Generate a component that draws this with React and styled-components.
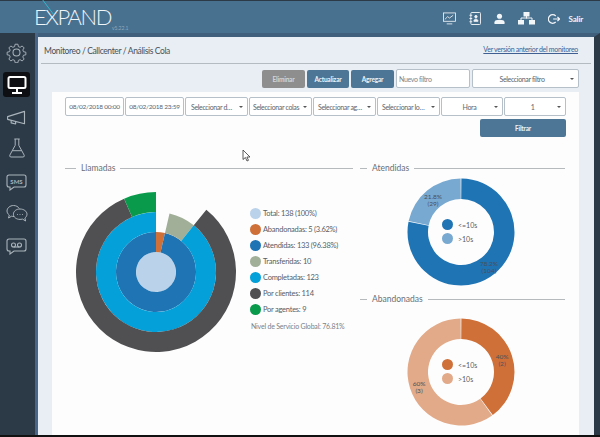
import React from 'react';
import styled, { createGlobalStyle } from 'styled-components';

const Global = createGlobalStyle`
  html, body { margin: 0; padding: 0; background: #000; }
  * { box-sizing: border-box; }
`;

const Page = styled.div`
  position: relative;
  width: 600px;
  height: 437px;
  overflow: hidden;
  display: flex;
  flex-direction: column;
  font-family: Lato, "Open Sans", sans-serif;
  color: #4a5560;
  background: #2c3a47;
  border-bottom: 2px solid #111;
`;

const Header = styled.header`
  height: 33px;
  flex: none;
  display: flex;
  align-items: center;
  justify-content: space-between;
  padding: 0 17px 0 34px;
  background: #48708f;
  border-top: 1px solid #2c3a47;
`;

const Logo = styled.div`
  position: relative;
  color: #f0f5f8;
  font-size: 22px;
  font-weight: 300;
  letter-spacing: -1.5px;
  line-height: 1;
`;

const LogoMark = styled.svg`
  position: absolute;
  left: 7px;
  top: -8px;
`;

const Version = styled.span`
  position: absolute;
  left: 78px;
  top: 20px;
  font-size: 5px;
  line-height: 1;
  letter-spacing: 0;
  color: #c5d3de;
  white-space: nowrap;
`;

const TopIcons = styled.nav`
  display: flex;
  align-items: center;
  gap: 13px;
  padding-top: 3px;
  color: #f3f6f9;
`;

const Exit = styled.span`
  font-size: 8px;
  font-weight: 700;
  letter-spacing: -0.2px;
  margin-left: -4px;
`;

const Body = styled.div`
  flex: 1;
  display: flex;
  min-height: 0;
`;

const Sidebar = styled.aside`
  width: 38px;
  flex: none;
  padding: 7px 2px 0 0;
  background: #2c3a47;
  border-right: 3px solid #48668a;
  display: flex;
  flex-direction: column;
  align-items: center;
`;

const SideItem = styled.div`
  width: 27px;
  height: 25px;
  flex: none;
  margin-bottom: ${p => p.$gap}px;
  display: flex;
  align-items: center;
  justify-content: center;
  border-radius: 3px;
  background: ${p => (p.$active ? '#0d0f12' : 'transparent')};
  color: ${p => (p.$active ? '#fff' : '#aab4bb')};
`;

const Main = styled.main`
  flex: 1;
  display: flex;
  flex-direction: column;
  background: #e8eef4;
  padding: 0 1px 0 3px;
  border-top: 4px solid #3f5f7c;
  border-right: 6px solid #2c3a47;
  min-width: 0;
  min-height: 0;
`;

const TitleRow = styled.div`
  height: 27px;
  flex: none;
  display: flex;
  align-items: center;
  justify-content: space-between;
  padding: 2px 13px 0 3px;
  border-bottom: 1px solid #b4bcc2;
  margin-right: 2px;
`;

const Crumb = styled.h1`
  margin: 0;
  font-size: 8.5px;
  font-weight: 400;
  letter-spacing: -0.37px;
  color: #465159;
`;

const OldLink = styled.a`
  font-size: 7px;
  letter-spacing: -0.3px;
  color: #3f5f92;
  text-decoration: underline;
  margin-top: -4px;
`;

const ActionRow = styled.div`
  height: 28px;
  flex: none;
  display: flex;
  align-items: flex-end;
  justify-content: flex-end;
  gap: 2px;
  padding: 0 14px 4px 0;
`;

const Button = styled.button`
  width: ${p => p.$w}px;
  height: 18px;
  padding: 0;
  border: none;
  border-radius: 2px;
  background: ${p => p.$bg || '#4d7696'};
  color: ${p => p.$fg || '#eef3f6'};
  font: 700 6.5px Lato, sans-serif;
  letter-spacing: -0.2px;
`;

const Field = styled.div`
  width: ${p => p.$w}px;
  height: 19px;
  flex: none;
  padding: 0 ${p => p.$right ?? 4}px 0 ${p => p.$pad ?? 4}px;
  display: flex;
  align-items: center;
  justify-content: ${p => (p.$center ? 'center' : 'flex-start')};
  background: #fff;
  border: 1px solid #b6c0c8;
  border-radius: 2px;
  font-size: ${p => (p.$small ? 6.5 : 7)}px;
  letter-spacing: ${p => (p.$small ? -0.25 : -0.35)}px;
  color: ${p => p.$fg || '#5b646c'};
  white-space: nowrap;
  position: relative;
`;

const Caret = styled.i`
  position: absolute;
  right: 4px;
  top: 8px;
  border: 2px solid transparent;
  border-top: 2.5px solid #555;
  border-bottom: none;
`;

const Card = styled.section`
  flex: 1;
  margin: 0 14px 0 11px;
  background: #fdfdfe;
  padding: 5px 13px 0 13px;
  min-height: 0;
  overflow: hidden;
`;

const FilterRow = styled.div`
  display: flex;
  gap: 1px;
`;

const FilterAction = styled.div`
  display: flex;
  justify-content: flex-end;
  margin-top: 3px;
`;

const Charts = styled.div`
  display: grid;
  grid-template-columns: 288px 205px;
  column-gap: 7px;
  margin-top: 25px;
`;

const Legend = styled.div`
  display: flex;
  align-items: center;
  gap: 5px;
  font-size: 8.5px;
  line-height: 12px;
  color: #6a6f74;
  &::before {
    content: '';
    flex: none;
    width: ${p => p.$lead}px;
    height: 1px;
    background: #b7babc;
  }
  &::after {
    content: '';
    flex: 1;
    height: 1px;
    background: #b7babc;
  }
`;

const Left = styled.div``;

const Right = styled.div`
  display: flex;
  flex-direction: column;
`;

const SunRow = styled.div`
  display: flex;
  align-items: flex-start;
  margin-top: 17px;
  margin-left: 10px;
`;

const KeyList = styled.ul`
  list-style: none;
  margin: 14px 0 0 13px;
  padding: 0;
  font-size: 7.5px;
  letter-spacing: -0.25px;
  color: #555e66;
`;

const KeyItem = styled.li`
  height: 16px;
  display: flex;
  align-items: center;
  gap: 2px;
  white-space: nowrap;
`;

const Dot = styled.span`
  width: 11px;
  height: 11px;
  border-radius: 50%;
  background: ${p => p.$c};
  flex: none;
`;

const Service = styled.p`
  margin: 5px 0 0 14px;
  font-size: 7px;
  letter-spacing: -0.2px;
  color: #7a8288;
  white-space: nowrap;
`;

const NextTitle = styled.div`
  margin: 80px 0 0 18px;
  font-size: 9px;
  letter-spacing: -0.1px;
  color: #3c444b;
`;

const DonutWrap = styled.div`
  position: relative;
  width: 110px;
  height: 110px;
  flex: none;
  margin: ${p => p.$top}px 0 ${p => p.$bottom}px 46px;
`;

const DonutKeys = styled.div`
  position: absolute;
  left: 36px;
  top: 42px;
  font-size: 7px;
  color: #555e66;
  display: flex;
  flex-direction: column;
  gap: 3px;
`;

const DonutKey = styled.div`
  display: flex;
  align-items: center;
  gap: 5px;
  height: 11px;
`;

const Pct = styled.span`
  position: absolute;
  left: ${p => p.$x}px;
  top: ${p => p.$y}px;
  width: 24px;
  text-align: center;
  font-size: 6.5px;
  line-height: 7px;
  color: #4a5058;
`;

const Cursor = styled.svg`
  position: absolute;
  left: 242px;
  top: 149px;
`;

const pol = (cx, cy, r, a) => {
  const t = ((a - 90) * Math.PI) / 180;
  return [cx + r * Math.cos(t), cy + r * Math.sin(t)];
};

const arc = (cx, cy, r0, r1, a0, a1) => {
  const large = a1 - a0 > 180 ? 1 : 0;
  const [x0, y0] = pol(cx, cy, r1, a0);
  const [x1, y1] = pol(cx, cy, r1, a1);
  const [x2, y2] = pol(cx, cy, r0, a1);
  const [x3, y3] = pol(cx, cy, r0, a0);
  return `M${x0} ${y0}A${r1} ${r1} 0 ${large} 1 ${x1} ${y1}L${x2} ${y2}A${r0} ${r0} 0 ${large} 0 ${x3} ${y3}Z`;
};

const Sunburst = () => (
  <svg width="162" height="162" viewBox="0 0 162 162">
    <circle cx="81" cy="81" r="20" fill="#bad3ea" />
    <path d={arc(81, 81, 20, 40, 0, 13)} fill="#cf7038" />
    <path d={arc(81, 81, 20, 40, 13, 359.99)} fill="#1f74b4" />
    <path d={arc(81, 81, 40, 60, 13, 39)} fill="#a1af98" />
    <path d={arc(81, 81, 40, 60, 39, 359.99)} fill="#04a0d9" />
    <path d={arc(81, 81, 60, 80, 39, 336.5)} fill="#505052" />
    <path d={arc(81, 81, 60, 80, 336.5, 359.99)} fill="#0a9a4c" />
  </svg>
);

const Donut = ({ dark, light, split }) => (
  <svg width="110" height="110" viewBox="0 0 110 110">
    <path d={arc(55, 55, 33, 53.5, split[0] + 0.4, split[1] - 0.4)} fill={dark} />
    <path d={arc(55, 55, 33, 53.5, split[1] + 0.4, split[0] + 359.6)} fill={light} />
  </svg>
);

const Gear = () => (
  <svg width="21" height="21" viewBox="0 0 24 24" fill="none" stroke="currentColor" strokeWidth="1.2" strokeLinejoin="round">
    <circle cx="12" cy="12" r="4" />
    <path d="M10.2 1.5h3.6l.6 3 2.2.9 2.6-1.700 2.500 2.500-1.700 2.600.9 2.200 3 .6v3.300l-3 .6-.9 2.200 1.700 2.600-2.500 2.500-2.600-1.700-2.200.9-.6 3h-3.600l-.6-3-2.200-.9-2.600 1.700-2.500-2.500 1.700-2.600-.9-2.200-3-.6v-3.300l3-.6.9-2.200-1.700-2.600 2.500-2.500 2.600 1.700 2.200-.9z" transform="translate(1.200 1.200) scale(.9)" />
  </svg>
);

const Screen = () => (
  <svg width="20" height="20" viewBox="0 0 20 20" fill="none" stroke="currentColor" strokeWidth="2">
    <rect x="1.500" y="2" width="17" height="11" rx="1.500" />
    <path d="M10 13v4M5 18h10" />
  </svg>
);

const Horn = () => (
  <svg width="21" height="16" viewBox="0 0 22 18" fill="none" stroke="currentColor" strokeWidth="1.300" strokeLinejoin="round">
    <path d="M1 7.500 20 1.500v14L1 10.500z" />
    <path d="M5 11.500v3l5 1.200v-3" />
  </svg>
);

const Flask = () => (
  <svg width="18" height="22" viewBox="0 0 20 22" fill="none" stroke="currentColor" strokeWidth="1.100" strokeLinejoin="round">
    <path d="M7 1h6M8 1v7L2 19a1.500 1.500 0 0 0 1.300 2h13.400A1.500 1.500 0 0 0 18 19L12 8V1" />
    <path d="M5 14h10" />
  </svg>
);

const Sms = () => (
  <svg width="21" height="17" viewBox="0 0 21 17" fill="none">
    <path d="M3 1h15a2 2 0 0 1 2 2v8a2 2 0 0 1-2 2H8l-4 3v-3H3a2 2 0 0 1-2-2V3a2 2 0 0 1 2-2z" stroke="currentColor" strokeWidth="1.100" />
    <text x="10.500" y="9.500" textAnchor="middle" fontSize="6" fontWeight="700" fontFamily="Lato, sans-serif" fill="currentColor">SMS</text>
  </svg>
);

const Chat = () => (
  <svg width="22" height="19" viewBox="0 0 22 19" fill="none" stroke="currentColor" strokeWidth="1">
    <path d="M8 12.500c-1 0-1.700-.1-2.400-.3L2.500 14l.8-3C1.800 10 1 8.500 1 7c0-3 3-5.500 6.500-5.500 2.500 0 4.700 1.200 5.800 3" />
    <path d="M14 5c3.800 0 7 2.300 7 5.200 0 1.500-.8 2.800-2.100 3.800l.7 3-3-1.900c-.8.200-1.700.3-2.600.3-3.800 0-6.600-2.300-6.600-5.200S10.200 5 14 5z" />
    <path d="M11 10.500h.8M13.600 10.500h.8M16.200 10.500h.8" />
  </svg>
);

const Voicemail = () => (
  <svg width="21" height="17" viewBox="0 0 21 17" fill="none" stroke="currentColor" strokeWidth="1.100">
    <path d="M3 1h15a2 2 0 0 1 2 2v8a2 2 0 0 1-2 2H8l-4 3v-3H3a2 2 0 0 1-2-2V3a2 2 0 0 1 2-2z" />
    <circle cx="7.500" cy="7" r="2" />
    <circle cx="13.500" cy="7" r="2" />
    <path d="M7.500 9h6" />
  </svg>
);

const Monitor = () => (
  <svg width="13" height="13" viewBox="0 0 14 14" fill="none" stroke="currentColor" strokeWidth="0.900">
    <rect x="0.500" y="1" width="13" height="9" />
    <path d="M2 8l3-3 2 1.500L11 3.500M4 12.800h6" />
  </svg>
);

const Contacts = () => (
  <svg width="12" height="13" viewBox="0 0 13 14" fill="none" stroke="currentColor" strokeWidth="1">
    <rect x="2" y="0.500" width="10.500" height="13" rx="1" />
    <path d="M0.500 3.500H3.500M0.500 7H3.500M0.500 10.500H3.500" />
    <circle cx="7.500" cy="5" r="1.300" fill="currentColor" />
    <path d="M5.300 10c0-3 4.400-3 4.400 0z" fill="currentColor" />
  </svg>
);

const User = () => (
  <svg width="11" height="12" viewBox="0 0 12 12" fill="currentColor">
    <circle cx="6" cy="3" r="2.800" />
    <path d="M0.500 11.500V9.500C0.500 7.500 3 6.800 6 6.800s5.500.7 5.500 2.700v2z" />
  </svg>
);

const Network = () => (
  <svg width="17" height="13" viewBox="0 0 17 13" fill="currentColor">
    <rect x="5.500" y="0" width="6" height="4.500" />
    <rect x="0" y="8" width="6" height="4.500" />
    <rect x="11" y="8" width="6" height="4.500" />
    <path d="M3 8V6h11v2" fill="none" stroke="currentColor" strokeWidth="1" />
    <path d="M8.500 4v2.500" stroke="currentColor" strokeWidth="1" />
  </svg>
);

const Logout = () => (
  <svg width="12" height="12" viewBox="0 0 14 13" fill="none" stroke="currentColor" strokeWidth="1.400">
    <path d="M9 3A5 5 0 1 0 9 10" />
    <path d="M6 6.500h7.500M11 4l2.500 2.500L11 9" />
  </svg>
);

const filters = [
  { t: '08/02/2018 00:00', w: 59, center: true, small: true },
  { t: '08/02/2018 23:59', w: 59, center: true, small: true },
  { t: 'Seleccionar d…', w: 63, caret: true, pad: 5 },
  { t: 'Seleccionar colas', w: 63, caret: true, pad: 3 },
  { t: 'Seleccionar ag…', w: 63, caret: true },
  { t: 'Seleccionar lo…', w: 63, caret: true },
  { t: 'Hora', w: 62, caret: true, center: true, right: 9 },
  { t: '1', w: 62, caret: true, center: true, right: 9 },
];

const keys = [
  ['#bad3ea', 'Total: 138 (100%)'],
  ['#cf7038', 'Abandonadas: 5 (3.62%)'],
  ['#1f74b4', 'Atendidas: 133 (96.38%)'],
  ['#a1af98', 'Transferidas: 10'],
  ['#04a0d9', 'Completadas: 123'],
  ['#505052', 'Por clientes: 114'],
  ['#0a9a4c', 'Por agentes: 9'],
];

export default function App() {
  return (
    <Page>
      <Global />
      <Header>
        <Logo>
          EXPAND
          <LogoMark width="14" height="18" viewBox="0 0 14 18">
            <path d="M1 1 13 17" stroke="#35b5c9" strokeWidth="1" />
          </LogoMark>
          <Version>v5.22.1</Version>
        </Logo>
        <TopIcons>
          <Monitor />
          <Contacts />
          <User />
          <Network />
          <Logout />
          <Exit>Salir</Exit>
        </TopIcons>
      </Header>
      <Body>
        <Sidebar>
          <SideItem $gap={7}><Gear /></SideItem>
          <SideItem $gap={8} $active><Screen /></SideItem>
          <SideItem $gap={5}><Horn /></SideItem>
          <SideItem $gap={10}><Flask /></SideItem>
          <SideItem $gap={6}><Sms /></SideItem>
          <SideItem $gap={8}><Chat /></SideItem>
          <SideItem $gap={0}><Voicemail /></SideItem>
        </Sidebar>
        <Main>
          <TitleRow>
            <Crumb>Monitoreo / Callcenter / Análisis Cola</Crumb>
            <OldLink>Ver versión anterior del monitoreo</OldLink>
          </TitleRow>
          <ActionRow>
            <Button $w={43} $bg="#8e8e8e" $fg="#d5d5d5">Eliminar</Button>
            <Button $w={42}>Actualizar</Button>
            <Button $w={43}>Agregar</Button>
            <Field $w={74} $pad={2} $fg="#7d858b">Nuevo filtro</Field>
            <Field $w={107} $center $right={11}>Seleccionar filtro<Caret /></Field>
          </ActionRow>
          <Card>
            <FilterRow>
              {filters.map(f => (
                <Field key={f.t} $w={f.w} $center={f.center} $pad={f.pad} $right={f.right} $small={f.small}>
                  {f.t}
                  {f.caret && <Caret />}
                </Field>
              ))}
            </FilterRow>
            <FilterAction>
              <Button $w={86}>Filtrar</Button>
            </FilterAction>
            <Charts>
              <Left>
                <Legend $lead={11}>Llamadas</Legend>
                <SunRow>
                  <Sunburst />
                  <div>
                    <KeyList>
                      {keys.map(([c, t]) => (
                        <KeyItem key={t}><Dot $c={c} />{t}</KeyItem>
                      ))}
                    </KeyList>
                    <Service>Nivel de Servicio Global: 76.81%</Service>
                  </div>
                </SunRow>
                <NextTitle>Duración</NextTitle>
              </Left>
              <Right>
                <Legend $lead={7}>Atendidas</Legend>
                <DonutWrap $top={3} $bottom={6}>
                  <Donut dark="#1f74b4" light="#78a9d1" split={[0, 281.5]} />
                  <DonutKeys>
                    <DonutKey><Dot $c="#1f74b4" />&lt;=10s</DonutKey>
                    <DonutKey><Dot $c="#78a9d1" />&gt;10s</DonutKey>
                  </DonutKeys>
                  <Pct $x={15} $y={16}>21.8%<br />(29)</Pct>
                  <Pct $x={71} $y={83}>78.2%<br />(104)</Pct>
                </DonutWrap>
                <Legend $lead={7}>Abandonadas</Legend>
                <DonutWrap $top={12} $bottom={0}>
                  <Donut dark="#cf7038" light="#e2aa88" split={[0, 144]} />
                  <DonutKeys>
                    <DonutKey><Dot $c="#cf7038" />&lt;=10s</DonutKey>
                    <DonutKey><Dot $c="#e2aa88" />&gt;10s</DonutKey>
                  </DonutKeys>
                  <Pct $x={84} $y={36}>40%<br />(2)</Pct>
                  <Pct $x={1} $y={63}>60%<br />(3)</Pct>
                </DonutWrap>
              </Right>
            </Charts>
          </Card>
        </Main>
      </Body>
      <Cursor width="10" height="13" viewBox="0 0 10 13">
        <path d="M1 1v9.500l2.400-2 1.600 3.500 1.500-.7-1.600-3.300h3.100z" fill="#fff" stroke="#333" strokeWidth="0.800" />
      </Cursor>
    </Page>
  );
}
